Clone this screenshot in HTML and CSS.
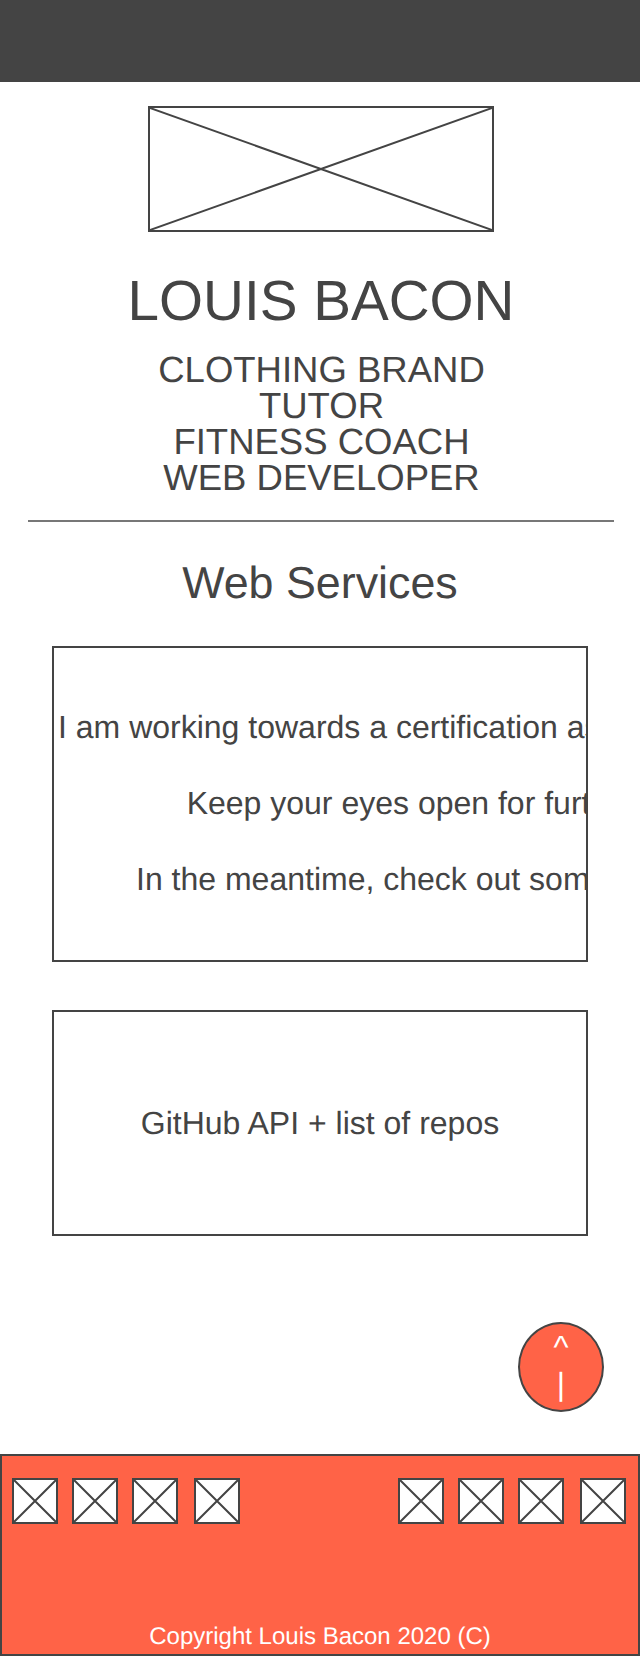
FILE: index.html
```html
<!DOCTYPE html>
<html lang="en">
<head>
<meta charset="utf-8">
<title>Louis Bacon</title>
<link rel="stylesheet" href="styles.css">
</head>
<body>
<div class="page">
  <header class="topbar"></header>
  <main class="main">
    <svg class="logo" viewBox="0 0 346 126" preserveAspectRatio="none"><path class="ph-line" d="M0 0L346 126M346 0L0 126"/></svg>
    <h1 class="name">LOUIS BACON</h1>
    <p class="roles">CLOTHING BRAND<br>TUTOR<br>FITNESS COACH<br>WEB DEVELOPER</p>
    <hr class="rule">
    <h2 class="section-title">Web Services</h2>
    <section class="card card-notes">
      <div class="notes">
        <p class="note">I am working towards a certification as a Web developer.</p>
        <p class="note">Keep your eyes open for further news.</p>
        <p class="note">In the meantime, check out some of my work.</p>
      </div>
    </section>
    <section class="card card-repos">
      <p class="note">GitHub API + list of repos</p>
    </section>
    <a class="to-top" href="#">^<br>|</a>
  </main>
  <footer class="footer">
    <div class="socials">
      <div class="social-group">
        <svg class="social" viewBox="0 0 46 46"><path class="ph-line" d="M0 0L46 46M46 0L0 46"/></svg>
        <svg class="social" viewBox="0 0 46 46"><path class="ph-line" d="M0 0L46 46M46 0L0 46"/></svg>
        <svg class="social" viewBox="0 0 46 46"><path class="ph-line" d="M0 0L46 46M46 0L0 46"/></svg>
        <svg class="social social-last" viewBox="0 0 46 46"><path class="ph-line" d="M0 0L46 46M46 0L0 46"/></svg>
      </div>
      <div class="social-group">
        <svg class="social" viewBox="0 0 46 46"><path class="ph-line" d="M0 0L46 46M46 0L0 46"/></svg>
        <svg class="social" viewBox="0 0 46 46"><path class="ph-line" d="M0 0L46 46M46 0L0 46"/></svg>
        <svg class="social" viewBox="0 0 46 46"><path class="ph-line" d="M0 0L46 46M46 0L0 46"/></svg>
        <svg class="social social-last" viewBox="0 0 46 46"><path class="ph-line" d="M0 0L46 46M46 0L0 46"/></svg>
      </div>
    </div>
    <p class="copyright">Copyright Louis Bacon 2020 (C)</p>
  </footer>
</div>
</body>
</html>
```
FILE: styles.css
```css
* {
  box-sizing: border-box;
}
html, body {
  margin: 0;
  padding: 0;
  background: #fff;
}
body {
  font-family: "Liberation Sans", Arial, sans-serif;
  color: #444;
  text-rendering: geometricPrecision;
}
.page {
  width: 640px;
  height: 1656px;
  display: flex;
  flex-direction: column;
  overflow: hidden;
}
.topbar {
  height: 82px;
  background: #444;
  flex: none;
}
.main {
  flex: 1;
  display: flex;
  flex-direction: column;
  align-items: center;
  padding-top: 24px;
  padding-left: 2px;
}
.ph-line {
  fill: none;
  stroke: #444;
  stroke-width: 2;
  vector-effect: non-scaling-stroke;
}
.logo {
  display: block;
  width: 346px;
  height: 126px;
  border: 2px solid #444;
  background: #fff;
  flex: none;
}
.name {
  margin: 37px 0 0;
  font-size: 56.6px;
  line-height: 64px;
  font-weight: 400;
  text-align: center;
}
.roles {
  margin: 19px 0 0 1px;
  font-size: 36.5px;
  line-height: 36px;
  text-align: center;
}
.rule {
  width: 586px;
  height: 2px;
  margin: 24px 0 0;
  border: 0;
  background: #777;
  flex: none;
}
.section-title {
  margin: 33px 2px 0 0;
  font-size: 44.8px;
  line-height: 56px;
  font-weight: 400;
  text-align: center;
}
.card {
  width: 536px;
  margin-right: 2px;
  border: 2px solid #444;
  overflow: hidden;
  display: flex;
  flex: none;
}
.card-notes {
  height: 316px;
  margin-top: 35px;
  align-items: center;
  padding-left: 4px;
  padding-bottom: 2px;
}
.card-repos {
  height: 226px;
  margin-top: 48px;
  align-items: center;
  justify-content: center;
}
.notes {
  flex: none;
  width: max-content;
  display: flex;
  flex-direction: column;
  gap: 40px;
  text-align: center;
}
.note {
  margin: 0;
  font-size: 32px;
  line-height: 36px;
  white-space: nowrap;
}
.to-top {
  display: block;
  width: 86px;
  height: 90px;
  margin-top: 86px;
  align-self: flex-end;
  margin-right: 36px;
  border: 2px solid #444;
  border-radius: 50%;
  background: #ff6347;
  color: #fff;
  font-size: 32px;
  line-height: 37px;
  text-align: center;
  text-decoration: none;
  padding-top: 5px;
}
.footer {
  height: 202px;
  flex: none;
  margin-top: auto;
  border: 2px solid #444;
  background: #ff6347;
  display: flex;
  flex-direction: column;
  justify-content: space-between;
}
.socials {
  display: flex;
  justify-content: space-between;
  padding: 22px 12px 0 10px;
}
.social-group {
  display: flex;
  gap: 14px;
}
.social {
  display: block;
  width: 46px;
  height: 46px;
  border: 2px solid #444;
  background: #fff;
}
.social-last {
  margin-left: 2px;
}
.copyright {
  margin: 0;
  color: #fff;
  font-size: 24px;
  line-height: 28px;
  text-align: center;
  padding-bottom: 3px;
}
```
